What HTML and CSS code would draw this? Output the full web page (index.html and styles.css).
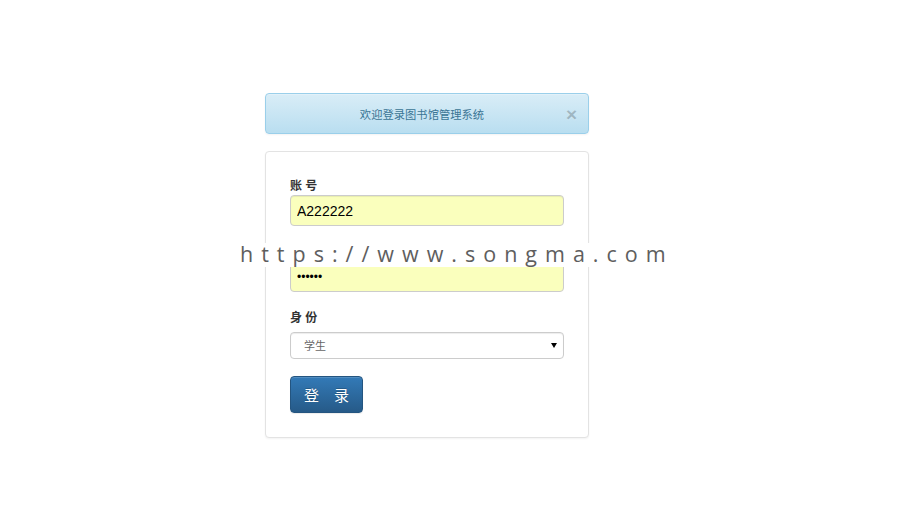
FILE: index.html
```html
<!DOCTYPE html>
<html lang="zh-CN">
<head>
    <meta charset="UTF-8">
    <meta name="viewport" content="width=device-width, initial-scale=1.0">
    <title>图书馆管理系统</title>
    <link rel="stylesheet" href="styles.css">
</head>
<body>
    <div class="login-frame">
        <div class="alert-box">
            <span class="alert-text">欢迎登录图书馆管理系统</span>
            <button class="alert-close">&times;</button>
        </div>
        <form class="login-card">
            <div class="form-group">
                <label for="account">账 号</label>
                <input id="account" type="text" value="A222222">
            </div>
            <div class="form-group">
                <label for="password">密 码</label>
                <input id="password" class="pass-input" type="password" value="123456">
            </div>
            <div class="form-group">
                <label for="role">身 份</label>
                <div class="select-box">
                    <select id="role">
                        <option>学生</option>
                        <option>教师</option>
                        <option>管理员</option>
                    </select>
                </div>
            </div>
            <button class="login-button" type="button">登　录</button>
        </form>
    </div>
    <div class="watermark">https://www.songma.com</div>
</body>
</html>
```

FILE: styles.css
```css
* {
    margin: 0;
    padding: 0;
    box-sizing: border-box;
}
body {
    position: relative;
    width: 900px;
    height: 510px;
    background: #fff;
    font-family: "Liberation Sans", "Noto Sans CJK SC", sans-serif;
    font-size: 12px;
    color: #333;
}
.login-frame {
    width: 324px;
    margin-left: 265px;
    padding-top: 93px;
    display: flex;
    flex-direction: column;
}

.alert-box {
    position: relative;
    height: 41px;
    padding: 3px 25px 0 15px;
    display: flex;
    justify-content: center;
    align-items: center;
    border: 1px solid #9acfea;
    border-radius: 4px;
    background: linear-gradient(to bottom, #d9edf7 0%, #b9def0 100%);
    box-shadow: inset 0 1px 0 rgba(255,255,255,0.25), 0 1px 2px rgba(0,0,0,0.05);
    color: #3a7595;
}
.alert-text {
    font-size: 11.3px;
    line-height: 17px;
}
.alert-close {
    position: absolute;
    right: 11px;
    top: 11px;
    border: none;
    background: none;
    font-family: "Liberation Sans", sans-serif;
    font-size: 19px;
    font-weight: 700;
    line-height: 19px;
    color: #000;
    opacity: 0.2;
    text-shadow: 0 1px 0 #fff;
    cursor: pointer;
}

.login-card {
    margin-top: 17px;
    padding: 25px 24px 24px 24px;
    border: 1px solid #e3e3e3;
    border-radius: 4px;
    background: #fff;
    box-shadow: 0 1px 2px rgba(0,0,0,0.05);
    display: flex;
    flex-direction: column;
    align-items: flex-start;
}
.form-group {
    width: 100%;
    margin-bottom: 17px;
    display: flex;
    flex-direction: column;
}
.form-group label {
    height: 18px;
    line-height: 18px;
    font-size: 12px;
    font-weight: 700;
    color: #333;
}
.form-group input {
    width: 100%;
    height: 31px;
    padding: 0 6px;
    border: 1px solid #ccc;
    border-radius: 4px;
    outline: none;
    background: #faffbd;
    box-shadow: inset 0 1px 1px rgba(0,0,0,0.075);
    font-family: "Liberation Sans", sans-serif;
    font-size: 14px;
    color: #000;
}
.form-group input.pass-input {
    font-size: 12px;
}
.select-box {
    position: relative;
    margin-top: 5px;
    width: 100%;
}
.select-box::after {
    position: absolute;
    content: '';
    right: 7px;
    top: 11px;
    width: 0px;
    height: 0px;
    border-style: solid;
    border-width: 5px 3px 0 3px;
    border-color: #000 transparent transparent transparent;
    pointer-events: none;
}
.select-box select {
    width: 100%;
    height: 27px;
    padding: 0 13px;
    border: 1px solid #ccc;
    border-radius: 4px;
    outline: none;
    appearance: none;
    background: #fff;
    box-shadow: inset 0 1px 1px rgba(0,0,0,0.075);
    font-family: "Liberation Sans", "Noto Sans CJK SC", sans-serif;
    font-size: 11px;
    color: #666;
}
.login-button {
    width: 73px;
    height: 37px;
    border: 1px solid #245580;
    border-radius: 4px;
    background: linear-gradient(to bottom, #337ab7 0%, #265a88 100%);
    box-shadow: inset 0 1px 0 rgba(255,255,255,0.15), 0 1px 1px rgba(0,0,0,0.075);
    color: #fff;
    font-family: "Noto Sans CJK SC", sans-serif;
    font-size: 15px;
    line-height: 20px;
    text-shadow: 0 -1px 0 rgba(0,0,0,0.2);
    cursor: pointer;
}

.watermark {
    position: absolute;
    left: 236px;
    top: 243px;
    width: 440px;
    height: 24px;
    background: #fff;
    padding-left: 4px;
    font-family: "Open Sans", "DejaVu Sans", sans-serif;
    font-size: 21.5px;
    line-height: 22px;
    letter-spacing: 8px;
    color: #5e5e5e;
    white-space: nowrap;
}
```
